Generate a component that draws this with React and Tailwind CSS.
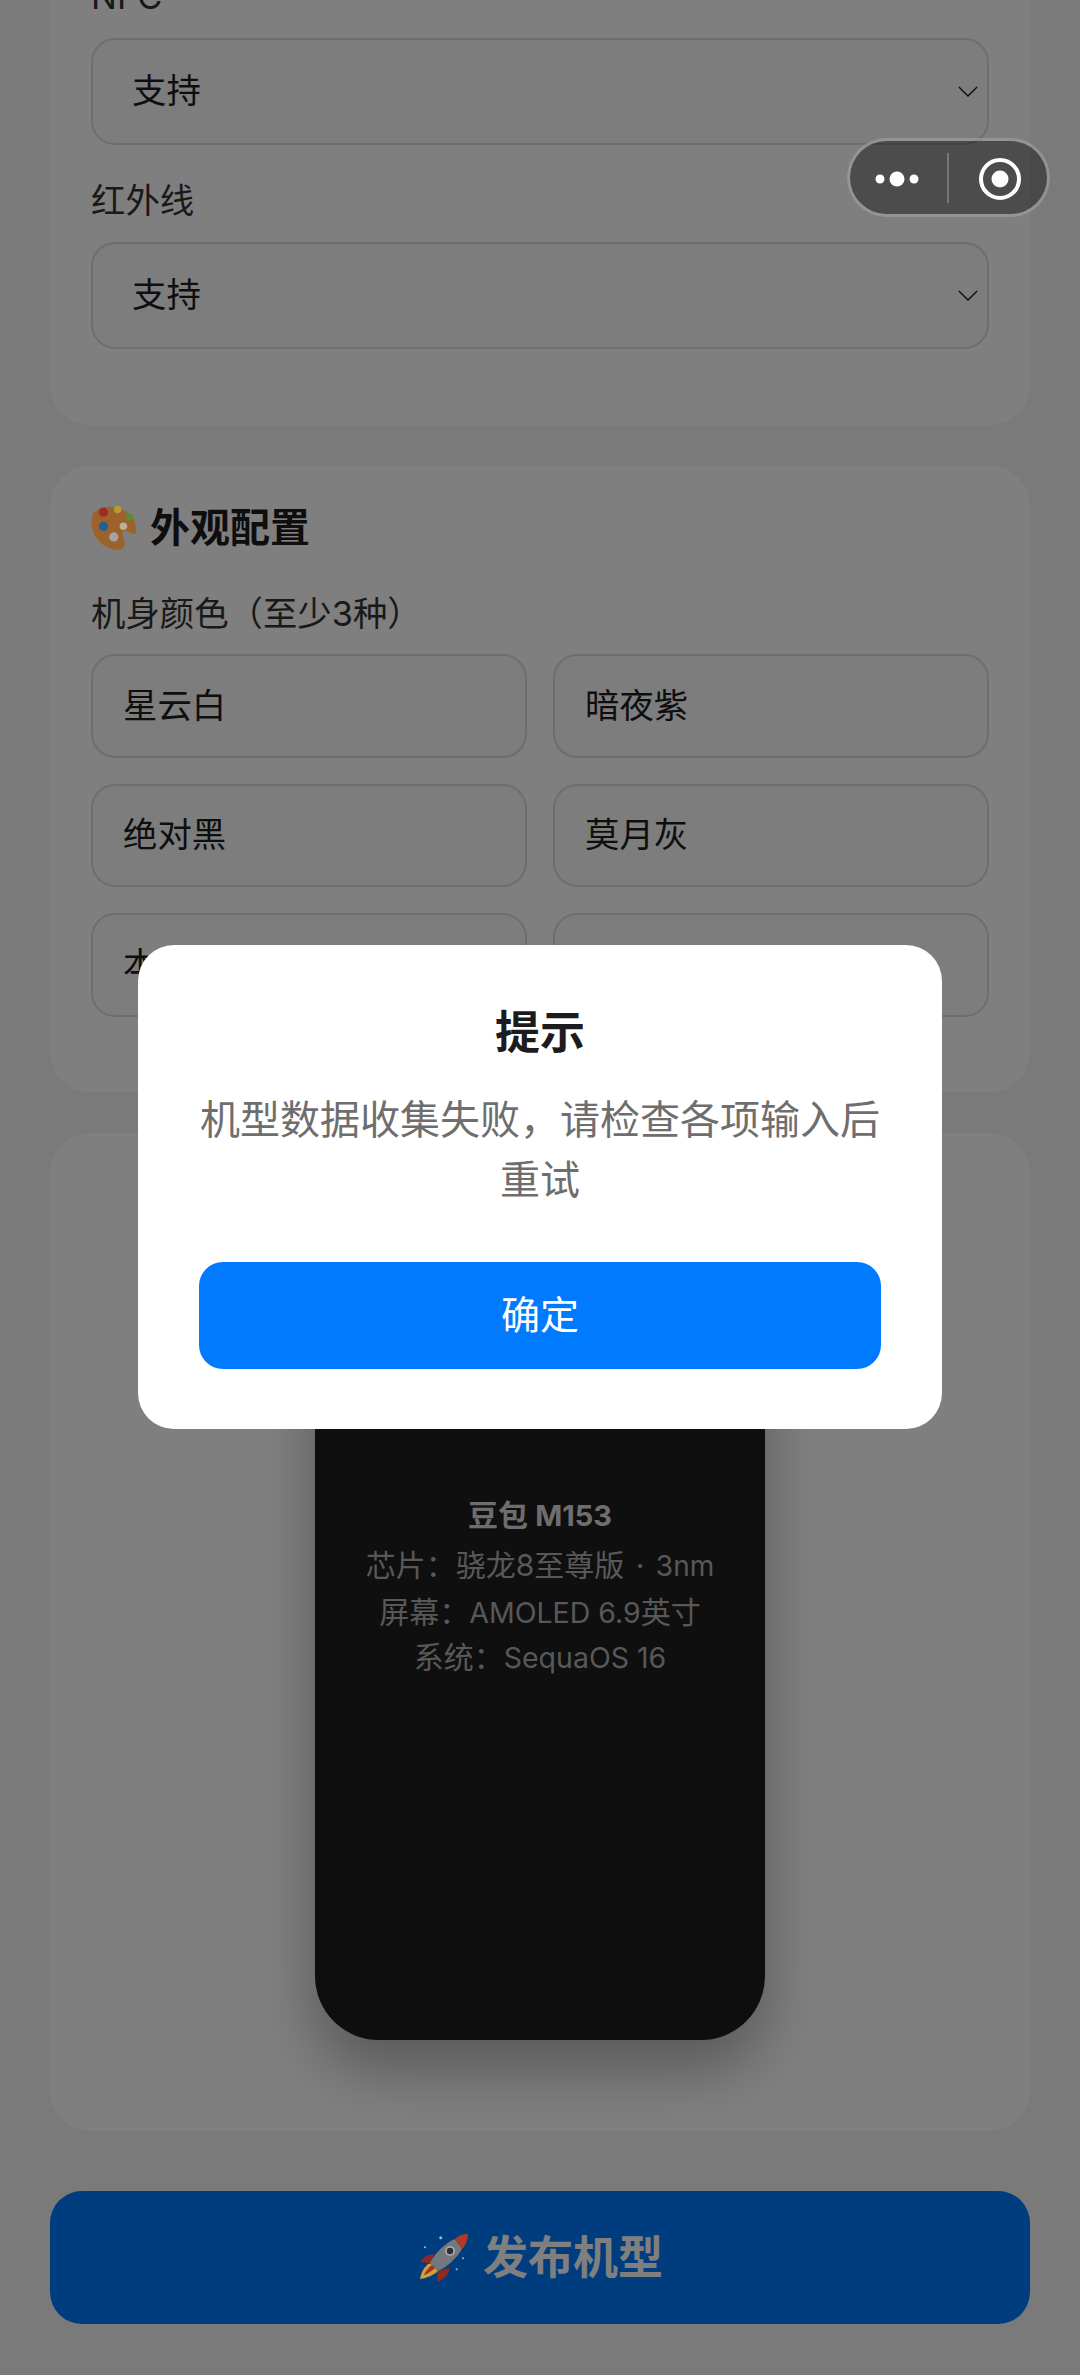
const font = { fontFamily: 'Inter, "Noto Sans CJK SC", sans-serif' };

function Chevron() {
  return (
    <svg width="20" height="13" viewBox="0 0 22 14" fill="none" stroke="#1c1c1e" strokeWidth="1.5">
      <path d="M1 2 L11 12 L21 2" />
    </svg>
  );
}

// emoji stand-ins sit above the mask, so their colours are the dimmed ones from the picture
function Palette() {
  return (
    <svg width="46" height="44" viewBox="7.5 11.5 40 38" className="relative z-10 shrink-0">
      <path d="M8 22 C9 14 20 10 31 13 C41 16 47 24 47 32 C47 37 43 36 40 34 C37 32 34 33 35 37 C36 41 38 43 36 47 C33 51 25 50 18 45 C11 40 7 31 8 22 Z" fill="#9c622b" />
      <circle cx="18.3" cy="16.7" r="4" fill="#a32a24" />
      <circle cx="30.7" cy="14.5" r="3.3" fill="#b89a30" />
      <circle cx="40.7" cy="20.7" r="3.3" fill="#5f8a30" />
      <circle cx="18.3" cy="29" r="4" fill="#1f5f9c" />
      <circle cx="35.7" cy="29" r="3.3" fill="#bcae98" />
      <circle cx="27.3" cy="38.3" r="4" fill="#a4a4a4" />
    </svg>
  );
}

function Rocket() {
  return (
    <svg width="54" height="54" viewBox="8 6 54 54" className="relative z-10 shrink-0">
      <path d="M21 38 C15 41 12 48 11 54 C18 53 25 50 29 46 Z" fill="#c9a23a" />
      <path d="M24 39 C19 43 16 47 15 50 C19 49 24 45 27 42 Z" fill="#a83020" />
      <path d="M25 29 C19 29 13 33 11 37 C15 37 18 38 21 39 Z" fill="#8f2a22" />
      <path d="M40 43 C41 48 36 54 29 57 C28 53 28 49 29 46 Z" fill="#8f2a22" />
      <path d="M46 14 C36 18 26 28 21 38 L29 46 C38 42 48 33 53 24 Z" fill="#74787d" />
      <path d="M46 14 C50 10 55 9 59 9 C59 14 57 20 53 24 Z" fill="#b03a26" />
      <circle cx="41" cy="26" r="5" fill="#a8a8a8" />
      <circle cx="41" cy="26" r="3.2" fill="#2a3036" />
      <circle cx="31.7" cy="12.7" r="1.5" fill="#a9b7c9" />
      <circle cx="16" cy="22.3" r="1" fill="#a9b7c9" />
      <circle cx="54" cy="33.3" r="1" fill="#a9b7c9" />
      <circle cx="47.7" cy="44.3" r="1" fill="#a9b7c9" />
    </svg>
  );
}

function Field({ label, value }) {
  return (
    <>
      <label className="block h-[49px] pt-[1px] mb-[17px] text-[34.4px] leading-[48px] text-[#333]">{label}</label>
      <div className="flex items-center justify-between h-[107px] mb-[31px] pl-[39px] pr-[9px] rounded-[24px] border-2 border-[#dcdcdc] bg-[#fafafa] text-[34.4px] text-[#1c1c1e]">
        <span className="pb-[2px]">{value}</span>
        <Chevron />
      </div>
    </>
  );
}

function ColorInput({ value }) {
  return (
    <input
      type="text"
      defaultValue={value}
      className="w-full h-[103.5px] pl-[30px] pr-[30px] pb-[6px] rounded-[24px] border-2 border-[#dcdcdc] bg-[#fafafa] text-[34.4px] text-[#1c1c1e] outline-none"
    />
  );
}

export default function App() {
  const colors = ['星云白', '暗夜紫', '绝对黑', '莫月灰', '本色钛', ''];

  return (
    <div style={font} className="relative h-[2375px] overflow-hidden bg-[#f5f5f7]">
      <div className="-mt-[69px] px-[50px] flex flex-col gap-[41px]">
        <section className="bg-white rounded-[40px] px-[41px] pt-[41px] pb-[45px]">
          <Field label="NFC" value="支持" />
          <Field label="红外线" value="支持" />
        </section>

        <section className="bg-white rounded-[40px] px-[41px] pt-[34px] pb-[75.5px]">
          <h2 className="flex items-center gap-[13px] h-[56px] mb-[31px] text-[40px] font-bold text-[#1c1c1e]">
            <Palette />
            外观配置
          </h2>
          <label className="block h-[51px] pt-[3px] mb-[16px] text-[34.4px] leading-[48px] text-[#333] [text-spacing-trim:space-all]">机身颜色（至少3种）</label>
          <div className="grid grid-cols-2 gap-[26px]">
            {colors.map((c, i) => <ColorInput key={i} value={c} />)}
          </div>
        </section>

        <section className="flex justify-center items-end h-[998px] pb-[91px] bg-white rounded-[40px]">
          <div className="w-[450px] h-[800px] p-[22px] pb-[152px] bg-[#1c1c1c] rounded-[64px] shadow-[0_30px_60px_rgba(0,0,0,0.3)]">
            <div className="h-full pt-[230px] bg-[#1e1e1e] rounded-[40px] text-center">
              <div className="h-[46px] mb-[5px] text-[30px] leading-[46px] font-bold text-[#ddd]">豆包 <span className="text-[29px]">M153</span></div>
              <div className="text-[30px] leading-[45.5px] text-[#b0b0b0]">
                <p>芯片：骁龙8至尊版<span className="mx-[3px]"> · </span><span className="text-[28px]">3nm</span></p>
                <p>屏幕：<span className="text-[28.5px]">AMOLED 6.9</span>英寸</p>
                <p>系统：<span className="text-[28.5px]">SequaOS 16</span></p>
              </div>
            </div>
          </div>
        </section>

        <button className="flex items-center justify-center gap-[12px] h-[133px] mt-[19px] bg-[#007aff] rounded-[32px] text-[45px] font-bold text-white">
          <Rocket />
          发布机型
        </button>
      </div>

      {/* mask + dialog */}
      <div className="absolute inset-0 bg-black/50">
        <div className="absolute left-[138px] top-[945px] w-[804px] h-[484px] px-[61px] pt-[56px] bg-white rounded-[36px] text-center">
          <h3 className="h-[62px] mt-[1px] text-[45px] leading-[62px] font-bold text-[#1c1c1e]">提示</h3>
          <p className="mt-[26px] text-[40px] leading-[60px] text-[#6e6e6e]">机型数据收集失败，请检查各项输入后重试</p>
          <button className="w-full h-[107px] mt-[52px] bg-[#007aff] rounded-[24px] text-[39px] text-white">确定</button>
        </div>
      </div>

      {/* wechat capsule */}
      <div className="absolute left-[847px] top-[138px] w-[203px] h-[79px] flex items-center rounded-full border-[3px] border-white/40 bg-black/40">
        <svg width="202" height="79" viewBox="0 0 202 79" className="-m-[3px] shrink-0">
          <circle cx="33" cy="41" r="4.5" fill="#fff" />
          <circle cx="50" cy="41" r="7.5" fill="#fff" />
          <circle cx="67" cy="41" r="4.5" fill="#fff" />
          <rect x="100" y="15" width="2" height="50" fill="#777" />
          <circle cx="153" cy="41" r="19" fill="none" stroke="#fff" strokeWidth="4" />
          <circle cx="153" cy="41" r="8.5" fill="#fff" />
        </svg>
      </div>
    </div>
  );
}
